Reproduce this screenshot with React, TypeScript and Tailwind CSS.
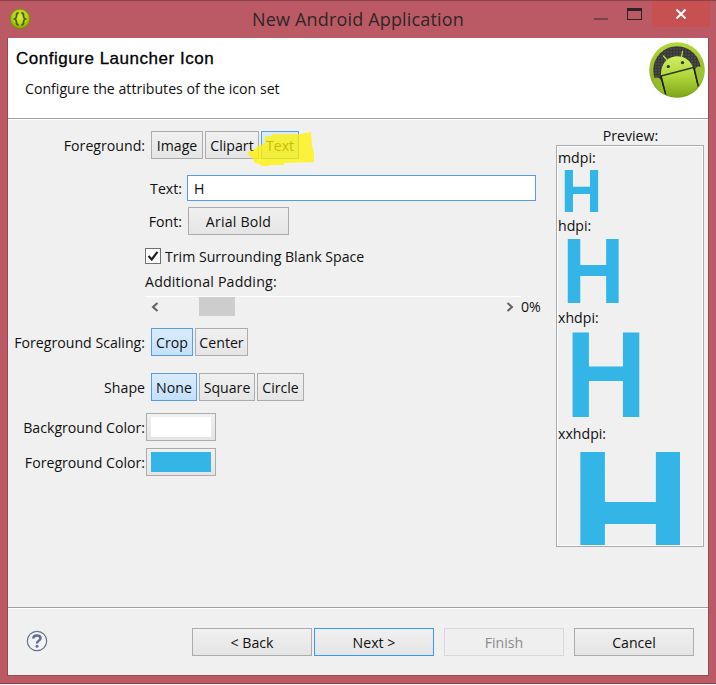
import type { ReactNode } from "react";

function ToolButton({ children, className = "", selected = false }: { children: ReactNode; className?: string; selected?: boolean }) {
  return (
    <button
      className={`flex h-7 shrink-0 items-center justify-center border bg-linear-to-b whitespace-nowrap ${
        selected ? "border-[#569de5] from-[#daecfc] to-[#c4e0fc]" : "border-[#acacac] from-[#f0f0f0] to-[#e5e5e5]"
      } ${className}`}
    >
      {typeof children === "string" ? <span className="pt-[2px]">{children}</span> : children}
    </button>
  );
}

function Label({ children, className = "" }: { children: ReactNode; className?: string }) {
  return <div className={`shrink-0 pt-[2px] text-right whitespace-nowrap ${className}`}>{children}</div>;
}

function Glyph({ box, text }: { box: string; text: string }) {
  return (
    <div className={`shrink-0 ${box}`}>
      <span className={`block origin-top-left scale-x-[0.93] font-['Liberation_Sans',Arial,sans-serif] leading-none font-bold text-[#33b5e8] ${text}`}>
        H
      </span>
    </div>
  );
}

function AndroidLogo() {
  return (
    <svg width="56" height="56" viewBox="0 0 56 56">
      <defs>
        <linearGradient id="rim" x1="0" y1="0" x2="0" y2="1">
          <stop offset="0" stopColor="#b5da3c" />
          <stop offset="1" stopColor="#78a012" />
        </linearGradient>
        <linearGradient id="bot" x1="0" y1="0" x2="0" y2="1">
          <stop offset="0" stopColor="#d0ef60" />
          <stop offset="0.5" stopColor="#b0d53a" />
          <stop offset="1" stopColor="#7fa61b" />
        </linearGradient>
        <pattern id="mesh" width="3" height="3" patternUnits="userSpaceOnUse">
          <rect width="3" height="3" fill="#383838" />
          <rect width="2" height="2" fill="#484848" />
        </pattern>
        <clipPath id="disc">
          <circle cx="28" cy="28" r="27" />
        </clipPath>
      </defs>
      <circle cx="28" cy="28" r="27.8" fill="url(#rim)" />
      <circle cx="28" cy="28" r="23.8" fill="url(#mesh)" />
      <g clipPath="url(#disc)">
        <path d="M4 39 Q5 35 8.500 35.500 Q11 36 12 38 L17 56 H0 V38Z" fill="#94bb2c" />
        <path d="M46 29 Q46 24.500 50 24.500 Q53 25 56 28 V44 L49 45Z" fill="#9cc432" />
        <path d="M12 33 C11.500 23 17 16 25.500 14.400 C34 13 41.500 18 44 25.500 L49 46 Q38 56 18 55Z" fill="url(#bot)" />
        <path d="M12 34 L44.500 25.500" stroke="#303b16" strokeWidth="1.300" />
        <path d="M12 34 L17 54 M45 26 L49.500 45" stroke="#1d2115" strokeWidth="1.500" />
      </g>
      <path d="M18 18 L14.500 14 M32.500 15 L33.500 9.500" stroke="#b9df43" strokeWidth="1.300" strokeLinecap="round" />
      <circle cx="19.300" cy="24.500" r="1.600" fill="#2c3514" />
      <circle cx="33.500" cy="20.600" r="1.600" fill="#2c3514" />
    </svg>
  );
}

function TitleBar() {
  return (
    <header className="flex h-[37px] shrink-0 items-start">
      <svg width="22" height="22" viewBox="0 0 22 22" className="mt-[7px] ml-[9px] shrink-0">
        <defs>
          <radialGradient id="badge" cx="0.5" cy="0.4" r="0.6">
            <stop offset="0" stopColor="#dcf02c" />
            <stop offset="0.6" stopColor="#b5d40c" />
            <stop offset="1" stopColor="#7d9a00" />
          </radialGradient>
        </defs>
        <circle cx="11" cy="11" r="9.900" fill="url(#badge)" stroke="#6c8413" strokeWidth="0.600" />
        <g fill="none" stroke="#4f5941" strokeWidth="1.800">
          <path d="M9.700 4.800 Q7.300 5 7.500 7.700 Q7.700 10 5.700 11 Q7.700 12 7.500 14.300 Q7.300 16.800 9.700 17" />
          <path d="M12.300 4.800 Q14.700 5 14.500 7.700 Q14.300 10 16.300 11 Q14.300 12 14.500 14.300 Q14.700 16.800 12.300 17" />
        </g>
      </svg>
      <h1 className="mt-1 ml-[221px] w-[217px] text-[18px] leading-7 tracking-[0.17px] whitespace-nowrap text-[#302528]">New Android Application</h1>
      <div className="mt-[17px] ml-[125px] h-[2px] w-[14px] bg-[#7b4148]" />
      <div className="mt-[7px] ml-[19px] h-3 w-[15px] border border-t-[3px] border-[#2e2226]" />
      <div className="ml-[10px] flex h-[26px] w-[58px] items-center justify-center bg-[#c75050]">
        <svg width="12" height="10" viewBox="0 0 12 10" className="-mt-px">
          <path d="M1.500 0.500 L10.500 9.500 M10.500 0.500 L1.500 9.500" stroke="#fff" strokeWidth="2" />
        </svg>
      </div>
    </header>
  );
}

function Scrollbar() {
  return (
    <div className="flex h-5 w-[376px] items-center border-t border-white">
      <svg width="10" height="10" viewBox="0 0 10 10" className="ml-[5px]">
        <path d="M7.500 1 L3 5 L7.500 9" fill="none" stroke="#606060" strokeWidth="2" />
      </svg>
      <div className="ml-[39px] h-full w-9 bg-[#cdcdcd]" />
      <svg width="10" height="10" viewBox="0 0 10 10" className="ml-[270px]">
        <path d="M2.500 1 L7 5 L2.500 9" fill="none" stroke="#606060" strokeWidth="2" />
      </svg>
    </div>
  );
}

function Form() {
  return (
    <div className="flex w-[548px] shrink-0 flex-col pt-[11px]">
      <div className="relative flex h-7 items-center gap-[2px]">
        <Label className="mr-1 w-[137px]">Foreground:</Label>
        <ToolButton className="w-[52px]">Image</ToolButton>
        <ToolButton className="w-[54px]">Clipart</ToolButton>
        <ToolButton className="w-[38px]" selected>Text</ToolButton>
        <svg width="68" height="38" viewBox="0 0 68 38" className="absolute top-0 left-[239px]">
          <path d="M18 5 H25 V3 H54 L64 1 L65 15 L67 22 V31 L37 32 V34 H24 L22 35 H14 L13 33 L8 32 L5 27 L1 23 V21 L7 19 L11 15 L18 12Z" fill="#fff200" fillOpacity="0.760" />
        </svg>
      </div>
      <div className="mt-4 flex h-[26px] items-center">
        <Label className="w-[174px]">Text:</Label>
        <div className="ml-[5px] flex h-full w-[349px] items-center border border-[#569de5] bg-white pt-[2px] pl-[6px]">H</div>
      </div>
      <div className="mt-[6px] flex h-7 items-center">
        <Label className="w-[174px]">Font:</Label>
        <ToolButton className="ml-[6px] w-[101px] tracking-[0.2px]">Arial Bold</ToolButton>
      </div>
      <div className="mt-[13px] ml-[137px] flex h-4 items-center gap-1">
        <div className="flex size-4 items-center justify-center border border-[#707070] bg-white">
          <svg width="12" height="12" viewBox="0 0 12 12">
            <path d="M1.500 6 L4.700 9.500 L10.500 1.800" fill="none" stroke="#202020" strokeWidth="2.200" />
          </svg>
        </div>
        <span className="pt-[2px]">Trim Surrounding Blank Space</span>
      </div>
      <div className="mt-2 ml-[137px] flex h-5 items-center tracking-[0.2px]">Additional Padding:</div>
      <div className="mt-1 ml-[137px] flex h-5 items-center">
        <Scrollbar />
        <span className="pt-[2px]">0%</span>
      </div>
      <div className="mt-3 flex h-7 items-center gap-[2px]">
        <Label className="mr-1 w-[137px]">Foreground Scaling:</Label>
        <ToolButton className="w-[42px]" selected>Crop</ToolButton>
        <ToolButton className="w-[53px]">Center</ToolButton>
      </div>
      <div className="mt-[17px] flex h-7 items-center gap-[2px]">
        <Label className="mr-1 w-[137px]">Shape</Label>
        <ToolButton className="w-[46px]" selected>None</ToolButton>
        <ToolButton className="w-[56px]">Square</ToolButton>
        <ToolButton className="w-[47px]">Circle</ToolButton>
      </div>
      <div className="mt-3 flex h-7 items-center gap-px">
        <Label className="w-[137px]">Background Color:</Label>
        <ToolButton className="w-[70px]">
          <span className="h-5 w-[60px] bg-white" />
        </ToolButton>
      </div>
      <div className="mt-[7px] flex h-7 items-center gap-px">
        <Label className="w-[137px]">Foreground Color:</Label>
        <ToolButton className="w-[70px]">
          <span className="h-5 w-[60px] bg-[#33b5e8]" />
        </ToolButton>
      </div>
    </div>
  );
}

function Preview() {
  return (
    <div className="flex w-[148px] shrink-0 flex-col pt-[6px]">
      <div className="flex h-[19px] items-center justify-center pt-px pl-px">Preview:</div>
      <div className="h-[402px] border border-[#a9abb0]">
        <div className="flex h-full flex-col items-start border border-white">
          <div className="flex h-[23px] items-start pt-px">mdpi:</div>
          <Glyph box="h-[42px] w-[34px] ml-[7px]" text="text-[61px] -mt-[9px] -ml-[4px]" />
          <div className="mt-1 flex h-5 items-center">hdpi:</div>
          <Glyph box="mt-[3px] h-[64px] w-[51px] ml-[10px]" text="text-[93px] -mt-[14px] -ml-[6px]" />
          <div className="mt-[5px] flex h-5 items-center">xhdpi:</div>
          <Glyph box="mt-[5px] h-[84px] w-[67px] ml-[14px]" text="text-[122px] -mt-[19px] -ml-[7px]" />
          <div className="mt-[7px] flex h-5 items-center">xxhdpi:</div>
          <Glyph box="mt-2 h-[93px] w-[100px] overflow-hidden ml-[22px]" text="text-[183px] -mt-[29px] -ml-[11px]" />
        </div>
      </div>
    </div>
  );
}

export default function App() {
  return (
    <div className="flex h-[685px] w-[716px] flex-col border-b border-[#f3f3f3] bg-[#bb5a64] font-['Open_Sans','Noto_Sans',sans-serif] text-[14.15px] leading-5 text-[#111]">
      <div className="flex h-[684px] flex-col border-y border-[#8b434b]">
        <TitleBar />
        <main className="mx-[7px] flex h-[638px] flex-col border border-t-0 border-[#98484f] bg-[#f0f0f0]">
          <section className="flex h-[81px] shrink-0 justify-between border-b border-[#a0a0a0] bg-white">
            <div>
              <h2 className="mt-[11px] ml-2 font-['Liberation_Sans',Arial,sans-serif] text-[17px] tracking-[0.52px] text-black [-webkit-text-stroke:0.3px_black]">Configure Launcher Icon</h2>
              <p className="mt-[10px] ml-[17px]">Configure the attributes of the icon set</p>
            </div>
            <div className="mt-1 mr-[3px]">
              <AndroidLogo />
            </div>
          </section>
          <section className="flex h-[489px] shrink-0 border-t border-b border-t-white border-b-[#a0a0a0]">
            <Form />
            <Preview />
          </section>
          <footer className="flex flex-1 items-start border-t border-white pt-[19px]">
            <svg width="22" height="22" viewBox="0 0 22 22" className="mt-[2px] ml-[18px] shrink-0">
              <circle cx="11" cy="11" r="9.700" fill="#f3f4f7" stroke="#65748d" strokeWidth="1.200" />
              <path d="M7.300 8.500 Q7.300 5.500 11 5.500 Q14.500 5.500 14.500 8.300 Q14.500 10 12.500 11 Q11 11.800 11 13.500" fill="none" stroke="#5f6f91" strokeWidth="2.500" />
              <circle cx="11" cy="16.300" r="1.500" fill="#5f6f91" />
            </svg>
            <ToolButton className="ml-[144px] w-[120px]">&lt; Back</ToolButton>
            <ToolButton className="ml-[2px] w-[120px] border-[#3399ff]!">Next &gt;</ToolButton>
            <ToolButton className="ml-[10px] w-[120px] border-[#d9d9d9]! from-[#efefef]! to-[#efefef]! text-[#8b8b8b]">Finish</ToolButton>
            <ToolButton className="ml-[10px] w-[120px]">Cancel</ToolButton>
          </footer>
        </main>
      </div>
    </div>
  );
}
